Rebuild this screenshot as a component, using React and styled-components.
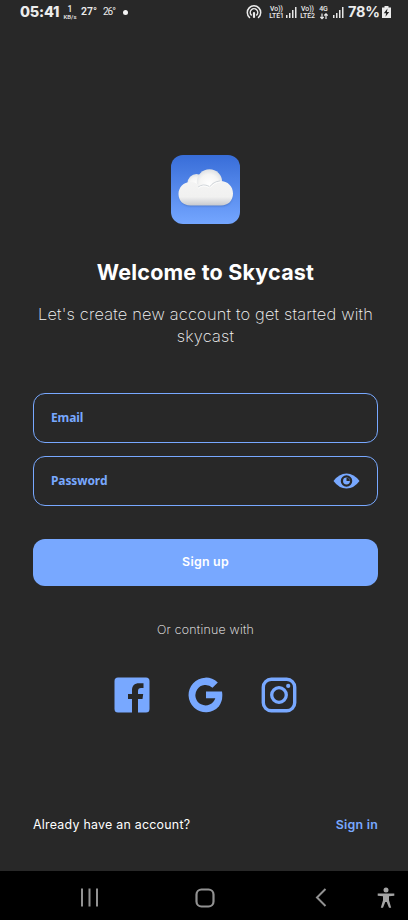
import React from "react";
import styled, { createGlobalStyle } from "styled-components";

const BLUE = "#78a8ff";

const GlobalStyle = createGlobalStyle`
  * { box-sizing: border-box; }
  body { margin: 0; background: #282828; }
`;

const Screen = styled.div`
  width: 408px;
  height: 920px;
  display: flex;
  flex-direction: column;
  overflow: hidden;
  background: #282828;
  color: #fff;
  font-family: Inter, sans-serif;
`;

const StatusBar = styled.header`
  height: 24px;
  flex: none;
  display: flex;
  justify-content: space-between;
  padding: 0 17px 0 20px;
  color: #ececec;
`;

const StatusGroup = styled.div`
  display: flex;
  align-items: center;
  height: 24px;
`;

const StatusText = styled.span`
  display: block;
  flex: none;
  width: ${(p) => p.$w}px;
  margin-left: ${(p) => p.$gap || 0}px;
  font: ${(p) => p.$weight || 700} ${(p) => p.$size}px/24px ${(p) => p.$font || "Inter"}, sans-serif;
  letter-spacing: ${(p) => p.$track || 0}px;
  white-space: nowrap;
`;

const Stack = styled.span`
  display: flex;
  flex: none;
  flex-direction: column;
  align-items: center;
  width: ${(p) => p.$w}px;
  margin-left: ${(p) => p.$gap || 0}px;
  padding-top: 1px;
  font: ${(p) => p.$weight || 500} ${(p) => p.$size || 7}px/7px Roboto, sans-serif;
  white-space: nowrap;
`;

const StackTop = styled.span`
  font-size: ${(p) => p.$size || 7}px;
  line-height: 8px;
`;

const Dot = styled.i`
  width: 5px;
  height: 5px;
  margin-left: 8px;
  border-radius: 50%;
  background: #f4f4f4;
`;

const Glyph = styled.svg`
  display: block;
  flex: none;
  margin-left: ${(p) => p.$gap || 0}px;
`;

const Content = styled.main`
  height: 847px;
  flex: none;
  display: flex;
  flex-direction: column;
  padding: 131px 30px 0 33px;
`;

const Logo = styled.svg`
  display: block;
  align-self: center;
`;

const Title = styled.h1`
  margin: 30px 0 0;
  text-align: center;
  font-size: 21.5px;
  line-height: 34px;
  font-weight: 700;
  letter-spacing: 0.2px;
`;

const Subtitle = styled.p`
  margin: 14px -10px 0;
  text-align: center;
  font-size: 16.4px;
  line-height: 22px;
  font-weight: 200;
  color: #f6f6f6;
  letter-spacing: 0.2px;
`;

const Fields = styled.div`
  display: flex;
  flex-direction: column;
  gap: 13px;
  margin-top: 46px;
`;

const Field = styled.label`
  height: 50px;
  display: flex;
  align-items: center;
  justify-content: space-between;
  padding: 0 17px;
  border: 1px solid ${BLUE};
  border-radius: 12px;
  color: ${BLUE};
  font: 700 12px/18px "Noto Sans", sans-serif;
  letter-spacing: -0.1px;
`;

const SignUp = styled.button`
  height: 47px;
  margin-top: 33px;
  padding: 0 0 1px;
  border: 0;
  border-radius: 12px;
  background: ${BLUE};
  color: #fff;
  font: 600 12.4px/18px Inter, sans-serif;
  letter-spacing: 0.25px;
`;

const Divider = styled.p`
  margin: 35px 0 0;
  text-align: center;
  font-size: 12.4px;
  line-height: 18px;
  font-weight: 200;
  color: #fff;
  letter-spacing: 0.25px;
`;

const Socials = styled.div`
  display: flex;
  align-items: center;
  justify-content: center;
  gap: 38px;
  height: 36px;
  margin-top: 38px;
`;

const Footer = styled.div`
  display: flex;
  justify-content: space-between;
  margin-top: 102px;
  font-size: 12.4px;
  line-height: 20px;
  letter-spacing: 0.25px;
`;

const SignIn = styled.a`
  color: ${BLUE};
  font-weight: 600;
`;

const NavBar = styled.nav`
  height: 49px;
  flex: none;
  display: flex;
  align-items: center;
  padding-top: 4px;
  background: #000;
`;

function Bars() {
  return (
    <Glyph width="11" height="11" viewBox="0 0 11 11" $gap={2} fill="#e6e6e6">
      <path d="M0 8h1.500v3H0zM3 6h1.500v5H3zM6 3h1.500v8H6zM9 0h1.500v11H9z" />
    </Glyph>
  );
}

function CloudLogo() {
  return (
    <Logo width="69" height="70" viewBox="0 0 69 70">
      <defs>
        <linearGradient id="sky" x1="0" y1="0" x2="0" y2="1">
          <stop stopColor="#386dd8" />
          <stop offset="1" stopColor="#74a6ff" />
        </linearGradient>
        <linearGradient id="cloud" gradientUnits="userSpaceOnUse" x1="0" y1="25" x2="0" y2="51">
          <stop stopColor="#f4f4f4" />
          <stop offset=".65" stopColor="#f1f1f0" />
          <stop offset="1" stopColor="#c5c8cd" />
        </linearGradient>
        <radialGradient id="puff" cx=".48" cy=".58" r=".58">
          <stop stopColor="#fff" />
          <stop offset=".65" stopColor="#f5f5f4" />
          <stop offset="1" stopColor="#dde0e3" />
        </radialGradient>
        <filter id="soft" x="-20%" y="-20%" width="140%" height="150%">
          <feGaussianBlur stdDeviation="1" />
        </filter>
      </defs>
      <rect width="69" height="69" rx="12" fill="url(#sky)" />
      <path d="M20 51h30c7 0 11-4 11-10H9c0 6 4 10 11 10z" fill="#315caa" opacity=".65" filter="url(#soft)" />
      <circle cx="25.500" cy="28" r="9" fill="url(#puff)" />
      <circle cx="38.500" cy="27" r="12.700" fill="url(#puff)" />
      <path d="M19.500 50.500C12 50.500 7.500 45.500 7.500 39S12.500 27 19.500 27c4.500 0 7.500 1.700 9.500 4.200 3-2 7-2 10 .3 2.500-3.700 6-5.500 10-5.500 8 0 13 5.500 13 12.500S57.500 50.500 50 50.500z" fill="url(#cloud)" />
      <path d="M27 32.200q5-4 11-.8M39 31.500q3.500-5 10-5.500" fill="none" stroke="#c5cbd2" strokeWidth=".8" />
      <path d="M27 33.200q5-4 11-.8M39.500 32.500q3.500-5 10-5.500" fill="none" stroke="#fff" strokeWidth="1" opacity=".8" />
    </Logo>
  );
}

export default function App() {
  return (
    <>
      <GlobalStyle />
      <Screen>
        <StatusBar>
          <StatusGroup>
            <StatusText $w={39} $size={14.500} $weight={800} $track={-0.2}>05:41</StatusText>
            <Stack $w={14} $gap={4} $size={6}>
              <StackTop $size={8.500}>1</StackTop>
              <span>KB/s</span>
            </Stack>
            <StatusText $w={16} $gap={4} $size={10.500} $weight={600} $font="Roboto">27°</StatusText>
            <StatusText $w={12} $gap={6} $size={10} $weight={400} $font="Roboto" $track={-1}>26°</StatusText>
            <Dot />
          </StatusGroup>
          <StatusGroup>
            <Glyph width="16" height="14" viewBox="0 0 16 14" fill="none" stroke="#ececec" strokeWidth="1.500" strokeLinecap="round">
              <path d="M3.500 12.500a6.700 6.700 0 1 1 9 0M5.300 10a3.700 3.700 0 1 1 5.400 0" />
              <path d="M8 8v4" strokeWidth="2.200" />
            </Glyph>
            <Stack $w={15} $gap={7} $size={6.800}><span>Vo))</span><span>LTE1</span></Stack>
            <Bars />
            <Stack $w={15} $gap={3} $size={6.800}><span>Vo))</span><span>LTE2</span></Stack>
            <Stack $w={9} $gap={4} $size={7}>
              <span>4G</span>
              <Glyph width="8" height="7" viewBox="0 0 8 7" fill="none" stroke="#ececec" strokeWidth="1.200">
                <path d="M2 .5v5M.3 4 2 5.700 3.700 4M6 6V1M4.300 2.500 6 .8l1.700 1.700" />
              </Glyph>
            </Stack>
            <Glyph as="span" $gap={3} />
            <Bars />
            <StatusText $w={33} $gap={4} $size={14.500} $weight={700} $track={-0.15}>78%</StatusText>
            <Glyph $gap={1} width="9" height="12" viewBox="0 0 9 12">
              <path d="M2.500 0h4v1.500H9V12H0V1.500h2.500z" fill="#ececec" />
              <path d="M5.500 2.500 1.800 7.200h2.300L3.500 10.800l3.700-4.900H4.900z" fill="#222" />
            </Glyph>
          </StatusGroup>
        </StatusBar>

        <Content>
          <CloudLogo />
          <Title>Welcome to Skycast</Title>
          <Subtitle>Let's create new account to get started with<br />skycast</Subtitle>
          <Fields>
            <Field>Email</Field>
            <Field>
              Password
              <svg width="27" height="16" viewBox="0 0 27 16">
                <path d="M.5 8Q6 .5 13.500.5T26.500 8Q21 15.500 13.500 15.500T.5 8z" fill={BLUE} />
                <circle cx="13.500" cy="8" r="4.600" fill={BLUE} stroke="#282828" strokeWidth="2.300" />
                <path d="M13.500 4.700V8h3.300A3.300 3.300 0 0 0 13.500 4.700z" fill="#282828" />
              </svg>
            </Field>
          </Fields>
          <SignUp type="button">Sign up</SignUp>
          <Divider>Or continue with</Divider>
          <Socials>
            <svg width="36" height="36" viewBox="0 0 36 36" fill={BLUE}>
              <path d="M4 .5h28a3.500 3.500 0 0 1 3.500 3.500v28a3.500 3.500 0 0 1-3.500 3.500h-8V22h4.500l.7-5H24v-3c0-2 1-3 3-3h2.500V6.200H25c-4.500 0-7 2.500-7 7V17h-4v5h4v13.500H4A3.500 3.500 0 0 1 .5 32V4A3.500 3.500 0 0 1 4 .5z" />
            </svg>
            <svg width="35" height="36" viewBox="-0.500 0 35 36" fill={BLUE}>
              <path d="M29.300 5.400 24 10.700A10.200 10.200 0 1 0 26.800 21.300H17.500V14.600H33.500Q34.900 23.500 30.300 29.400A17.300 17.300 0 1 1 29.300 5.400z" />
            </svg>
            <svg width="36" height="36" viewBox="0 0 36 36" fill="none" stroke={BLUE}>
              <rect x="2.300" y="2.300" width="31.400" height="31.400" rx="8" strokeWidth="3.400" />
              <circle cx="18" cy="18" r="7.300" strokeWidth="3.300" />
              <circle cx="27.200" cy="8.900" r="2.100" fill={BLUE} stroke="none" />
            </svg>
          </Socials>
          <Footer>
            <span>Already have an account?</span>
            <SignIn>Sign in</SignIn>
          </Footer>
        </Content>

        <NavBar>
          <Glyph $gap={80} width="19" height="19" viewBox="0 0 19 19" stroke="#929292" strokeWidth="2">
            <path d="M2 .5v18M9.500 .5v18M17 .5v18" />
          </Glyph>
          <Glyph $gap={96} width="20" height="20" viewBox="0 0 20 20" fill="none" stroke="#929292" strokeWidth="2.200">
            <rect x="1.500" y="1.500" width="17" height="17" rx="5" />
          </Glyph>
          <Glyph $gap={100} width="12" height="19" viewBox="0 0 12 19" fill="none" stroke="#929292" strokeWidth="2">
            <path d="M10.500 1 2 9.500l8.500 8.500" />
          </Glyph>
          <Glyph $gap={50} width="18" height="22" viewBox="0 0 18 22" fill="#a4a4a4">
            <circle cx="9" cy="3" r="2.500" />
            <path d="M.7 6.500h16.600v2.200L12 9.300v4l2.200 7.500H12L9.700 15H8.300L6 20.800H3.800L6 13.300v-4L.7 8.700z" />
          </Glyph>
        </NavBar>
      </Screen>
    </>
  );
}
